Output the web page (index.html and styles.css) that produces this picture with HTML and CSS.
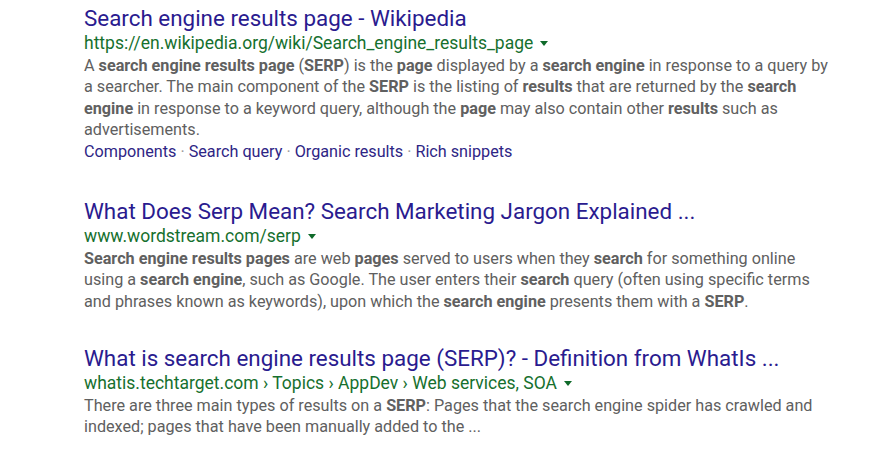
FILE: index.html
```html
<!DOCTYPE html>
<html lang="en">
<head>
    <meta charset="UTF-8">
    <title>serp - Search results</title>
    <link rel="stylesheet" href="styles.css">
</head>
<body>
    <div class="results">
        <div class="result">
            <h3 class="title"><a href="#">Search engine results page - Wikipedia</a></h3>
            <div class="url">
                <cite>https://en.wikipedia.org/wiki/Search_engine_results_page</cite>
                <span class="arrow"></span>
            </div>
            <p class="snippet">A <b>search engine results page</b> (<b>SERP</b>) is the <b>page</b> displayed by a <b>search engine</b> in response to a query by a searcher. The main component of the <b>SERP</b> is the listing of <b>results</b> that are returned by the <b>search engine</b> in response to a keyword query, although the <b>page</b> may also contain other <b>results</b> such as advertisements.</p>
            <div class="sitelinks">
                <a href="#">Components</a> · <a href="#">Search query</a> · <a href="#">Organic results</a> · <a href="#">Rich snippets</a>
            </div>
        </div>
        <div class="result">
            <h3 class="title"><a href="#">What Does Serp Mean? Search Marketing Jargon Explained ...</a></h3>
            <div class="url">
                <cite>www.wordstream.com/serp</cite>
                <span class="arrow"></span>
            </div>
            <p class="snippet"><b>Search engine results pages</b> are web <b>pages</b> served to users when they <b>search</b> for something online using a <b>search engine</b>, such as Google. The user enters their <b>search</b> query (often using specific terms and phrases known as keywords), upon which the <b>search engine</b> presents them with a <b>SERP</b>.</p>
        </div>
        <div class="result">
            <h3 class="title"><a href="#">What is search engine results page (SERP)? - Definition from WhatIs ...</a></h3>
            <div class="url">
                <cite>whatis.techtarget.com › Topics › AppDev › Web services, SOA</cite>
                <span class="arrow"></span>
            </div>
            <p class="snippet">There are three main types of results on a <b>SERP</b>: Pages that the search engine spider has crawled and indexed; pages that have been manually added to the ...</p>
        </div>
    </div>
</body>
</html>
```

FILE: styles.css
```css
*{
    margin: 0;
    padding: 0;
}
body{
    background-color: #ffffff;
    font-family: Roboto, "Liberation Sans", Arial, sans-serif;
}
a{
    color: #1a0dab;
    text-decoration: none;
}
.results{
    width: 746px;
    padding: 4.5px 0 0 84px;
}
.result{
    margin-bottom: 32.5px;
}
.result:last-child{
    margin-bottom: 0;
}
.title{
    font-size: 22.4px;
    font-weight: normal;
    line-height: 27px;
}
.title a{
    color: #2a1b8f;
}
.url{
    display: flex;
    align-items: center;
    height: 23px;
}
.url cite{
    font-style: normal;
    font-size: 17.5px;
    color: #16702e;
}
.arrow{
    width: 0;
    height: 0;
    margin-left: 7px;
    border-top: 5px solid #0f6a2a;
    border-left: 4px solid transparent;
    border-right: 4px solid transparent;
}
.snippet{
    font-size: 16.2px;
    line-height: 21.5px;
    color: #606060;
}
.snippet b{
    color: #606060;
}
.sitelinks{
    font-size: 16.2px;
    line-height: 22px;
    padding-bottom: 2.5px;
    color: #9a9a9a;
}
.sitelinks a{
    color: #2e2585;
}
```
